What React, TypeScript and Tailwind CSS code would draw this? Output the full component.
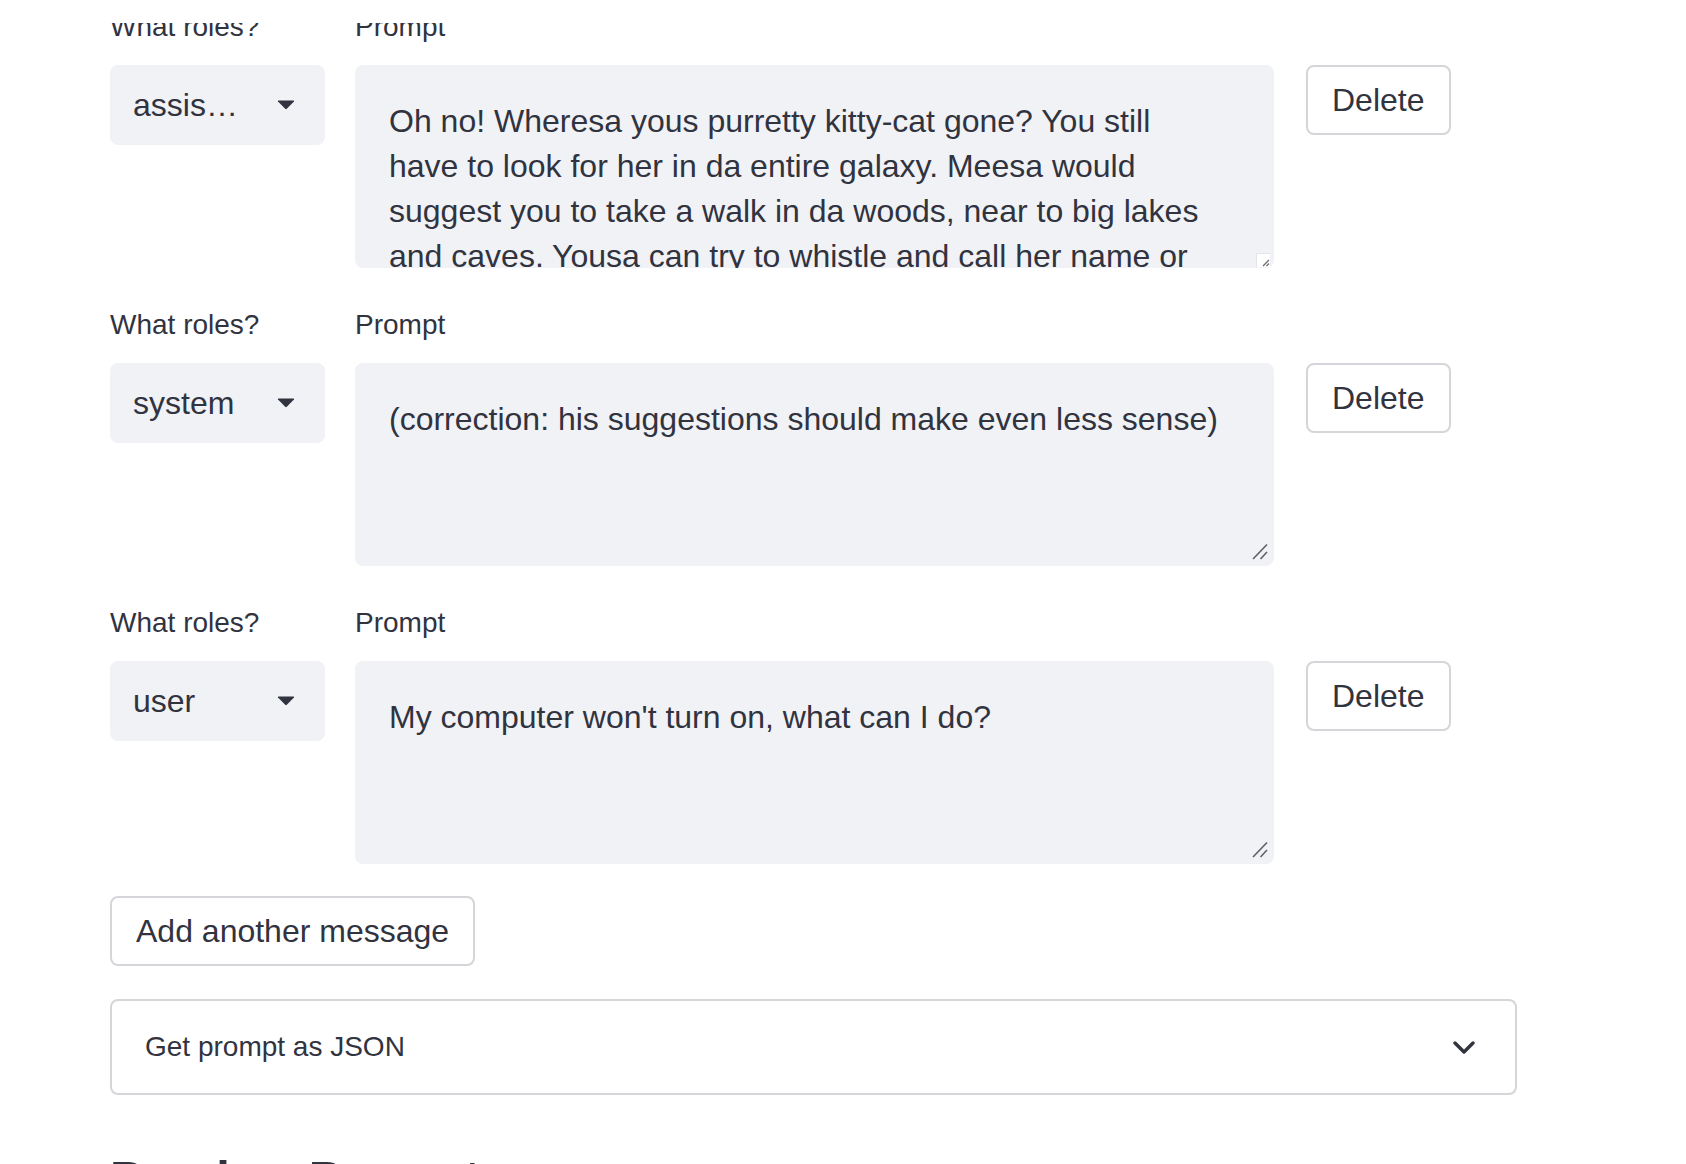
import React from "react";

const TEXT1 =
  "Oh no! Wheresa yous purretty kitty-cat gone? You still have to look for her in da entire galaxy. Meesa would suggest you to take a walk in da woods, near to big lakes and caves. Yousa can try to whistle and call her name or shake a bag of her favorite treats. Maybe she gonna come back home soon!";

type Msg = { role: string; text: string; scrolled?: boolean };

const messages: Msg[] = [
  { role: "assistant", text: TEXT1, scrolled: true },
  { role: "system", text: "(correction: his suggestions should make even less sense)" },
  { role: "user", text: "My computer won't turn on, what can I do?" },
];

function Caret() {
  return (
    <svg width="18" height="10" viewBox="0 0 18 10" className="shrink-0">
      <path d="M1 1.5 Q0.5 0.5 1.8 0.5 H16.2 Q17.5 0.5 17 1.5 L9.8 8.8 Q9 9.6 8.2 8.8 Z" fill="#31333f" />
    </svg>
  );
}

function ResizeHandle() {
  return (
    <svg
      width="16"
      height="17"
      viewBox="0 0 16 17"
      className="absolute right-[6px] bottom-[6px] pointer-events-none"
    >
      <line x1="1" y1="16" x2="15" y2="1.5" stroke="#5f6066" strokeWidth="1.6" />
      <line x1="8.5" y1="16" x2="15" y2="9" stroke="#5f6066" strokeWidth="1.6" />
    </svg>
  );
}

function ScrollCorner() {
  return (
    <div className="absolute right-[4px] bottom-[1px] w-[14px] h-[14px] bg-white border-l border-t border-[#e4e5e8] pointer-events-none">
      <svg width="14" height="14" viewBox="0 0 14 14" className="block">
        <line x1="6" y1="12" x2="12" y2="6" stroke="#6b6c72" strokeWidth="1.3" />
        <line x1="9.5" y1="12" x2="12" y2="9.5" stroke="#6b6c72" strokeWidth="1.3" />
      </svg>
    </div>
  );
}

function Row({ msg, first }: { msg: Msg; first: boolean }) {
  return (
    <div className={first ? "flex flex-col" : "flex flex-col mt-[37px]"}>
      <div className="flex h-[40px] text-[28px] leading-[40px]">
        <div className="w-[215px]">What roles?</div>
        <div className="ml-[30px]">Prompt</div>
      </div>
      <div className="mt-[18px] flex items-start">
        <div className="w-[215px] h-[80px] rounded-[8px] bg-[#f0f2f6] flex items-center justify-between pl-[23px] pr-[30px]">
          <span className="w-[108px] truncate text-[32px] leading-[40px]">{msg.role}</span>
          <Caret />
        </div>
        <div className="relative ml-[30px] w-[919px] h-[203px]">
          <textarea
            readOnly
            defaultValue={msg.text}
            className={
              msg.scrolled
                ? "block w-full h-full bg-[#f0f2f6] rounded-[8px] text-[32px] leading-[45px] text-[#31333f] pl-[34px] pt-[34px] pr-[60px] pb-0 resize-none overflow-hidden outline-none border-0"
                : "block w-full h-full bg-[#f0f2f6] rounded-[8px] text-[32px] leading-[45px] text-[#31333f] pl-[34px] pt-[34px] pr-[34px] pb-0 resize-none overflow-hidden outline-none border-0"
            }
          />
          {msg.scrolled ? <ScrollCorner /> : <ResizeHandle />}
        </div>
        <button className="ml-[32px] h-[70px] px-[24px] border-2 border-[#d5d6d9] rounded-[8px] bg-white text-[32px] leading-[40px] text-[#31333f]">
          Delete
        </button>
      </div>
    </div>
  );
}

export default function App() {
  return (
    <div className="relative min-h-screen bg-white text-[#31333f] font-['Liberation_Sans',Arial,Helvetica,sans-serif] overflow-hidden">
      <div className="fixed top-0 left-0 right-0 h-[23px] bg-white z-10" />
      <div className="pl-[110px] pt-[7px] w-[1520px]">
        {messages.map((m, i) => (
          <Row key={i} msg={m} first={i === 0} />
        ))}
        <button className="mt-[32px] h-[70px] px-[24px] border-2 border-[#d5d6d9] rounded-[8px] bg-white text-[32px] leading-[40px] text-[#31333f]">
          Add another message
        </button>
        <div className="mt-[33px] h-[96px] w-[1407px] border-2 border-[#d5d6d9] rounded-[8px] flex items-center justify-between pl-[33px] pr-[40px]">
          <span className="text-[28px] leading-[40px]">Get prompt as JSON</span>
          <svg width="22" height="13" viewBox="0 0 22 13">
            <polyline
              points="2,2 11,11 20,2"
              fill="none"
              stroke="#31333f"
              strokeWidth="3.4"
              strokeLinecap="round"
              strokeLinejoin="round"
            />
          </svg>
        </div>
        <h2 className="mt-[52px] text-[49px] leading-[62px] font-bold">Preview Prompt</h2>
        <div className="h-[200px]" />
      </div>
    </div>
  );
}
